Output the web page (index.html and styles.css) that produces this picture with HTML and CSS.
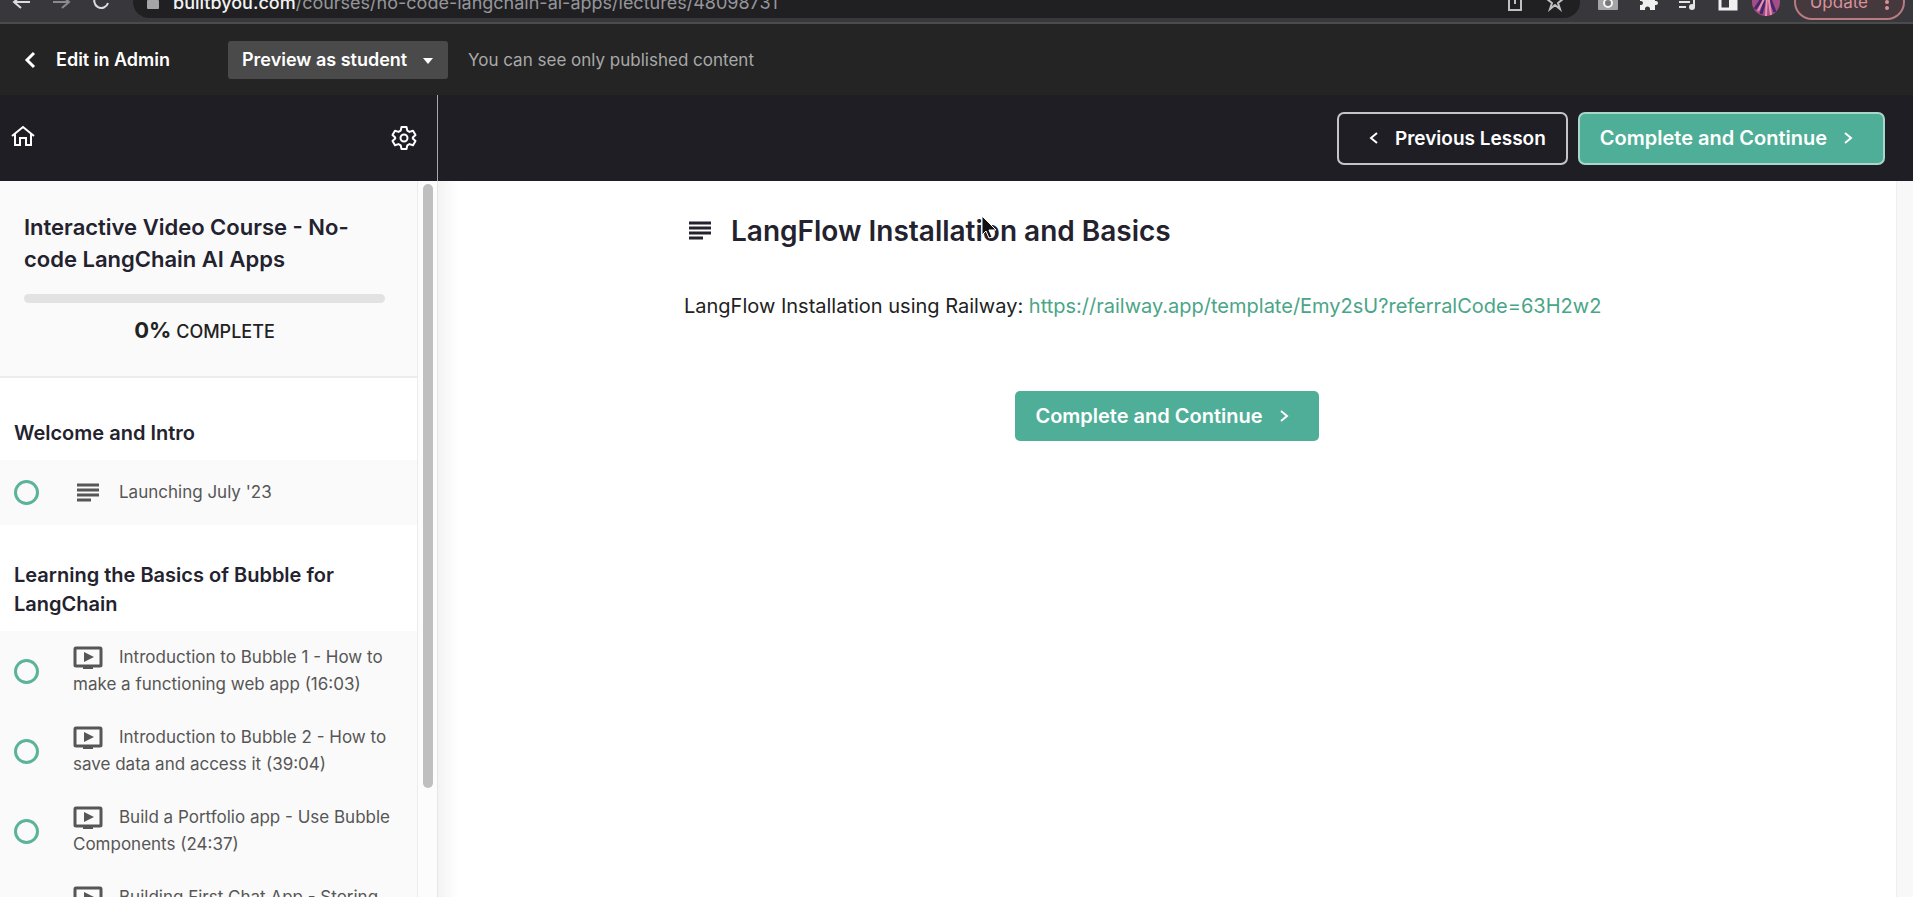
FILE: index.html
```html
<!DOCTYPE html>
<html lang="en">
<head>
<meta charset="utf-8">
<title>LangFlow Installation and Basics</title>
<link rel="stylesheet" href="styles.css">
</head>
<body>
<svg class="sprite" aria-hidden="true">
  <symbol id="lines" viewBox="0 0 22 20"><path d="M0 2h22M0 7h22M0 12h22M0 17h14" fill="none" stroke="currentColor" stroke-width="3"/></symbol>
  <symbol id="video" viewBox="0 0 30 24"><rect x="2" y="2" width="26" height="18" rx="1" fill="none" stroke="currentColor" stroke-width="3"/><path d="M11 6l10 5-10 5z" fill="currentColor"/><path d="M10 20h10v3H10z" fill="currentColor"/></symbol>
  <symbol id="left" viewBox="0 0 10 14"><path d="M8 2L2 7l6 5" fill="none" stroke="currentColor" stroke-width="2"/></symbol>
  <symbol id="right" viewBox="0 0 10 14"><path d="M2 2l6 5-6 5" fill="none" stroke="currentColor" stroke-width="2"/></symbol>
</svg>

<div class="browser">
  <div class="browser-row">
    <nav class="browser-nav">
      <svg width="24" height="20" viewBox="0 0 24 20"><path d="M21 10H5M12 4l-7 6 7 6" fill="none" stroke="#dcdce0" stroke-width="2"/></svg>
      <svg width="24" height="20" viewBox="0 0 24 20"><path d="M3 10h16M12 4l7 6-7 6" fill="none" stroke="#8a8a90" stroke-width="2"/></svg>
      <svg width="20" height="20" viewBox="0 0 20 20"><path d="M16 5a7 7 0 1 0 1 6M17 1v6h-6" fill="none" stroke="#dcdce0" stroke-width="2"/></svg>
    </nav>
    <div class="address">
      <svg width="12" height="18" viewBox="0 0 12 18"><path d="M3 8V5a3 3 0 0 1 6 0v3" fill="none" stroke="#a5a5a5" stroke-width="2"/><rect y="7" width="12" height="9" rx="1" fill="#a5a5a5"/></svg>
      <span class="url"><b>builtbyou.com</b>/courses/no-code-langchain-ai-apps/lectures/48098731</span>
      <svg width="16" height="22" viewBox="0 0 16 22"><path d="M5 7H2v12h12V7h-3M8 13V2M4 5l4-4 4 4" fill="none" stroke="#c0c0c0" stroke-width="2"/></svg>
      <svg width="20" height="20" viewBox="0 0 20 20"><path d="M10 1l2 6h6l-5 4 2 6-5-4-5 4 2-6-5-4h6z" fill="none" stroke="#c0c0c0" stroke-width="2"/></svg>
    </div>
    <div class="extensions">
      <svg width="20" height="20" viewBox="0 0 20 20"><rect width="20" height="18" rx="1" fill="#a4a4a6"/><circle cx="10" cy="11" r="4" fill="#777" stroke="#f4f4f4" stroke-width="2"/></svg>
      <svg width="20" height="20" viewBox="0 0 20 20"><path d="M2 4h5V3a2 2 0 0 1 5 0v1h5v5h1a2 2 0 0 1 0 4h-1v5h-5v-1a2 2 0 0 0-5 0v1H2v-5h1a2 2 0 0 0 0-4H2z" fill="#f0f0f0"/></svg>
      <svg width="20" height="20" viewBox="0 0 20 20"><path d="M1 6h11M1 10h11M1 15h7M16 15V4h4" fill="none" stroke="#e4e4e4" stroke-width="2"/><circle cx="14" cy="15" r="3" fill="#e4e4e4"/></svg>
      <svg width="20" height="20" viewBox="0 0 20 20"><rect x="2" y="1" width="16" height="16" fill="none" stroke="#f0f0f0" stroke-width="3"/><path d="M11 1h7v16h-7z" fill="#f0f0f0"/></svg>
      <svg class="avatar" width="28" height="28" viewBox="0 0 28 28"><circle cx="14" cy="14" r="14" fill="#a54d86"/><path d="M3 21L14 5M9 26l6-20M23 24L16 6" stroke="#45276f" stroke-width="3"/><path d="M6 23l9-18M14 28l1-22M19 27L16 6" stroke="#e891ad" stroke-width="2"/></svg>
      <button class="update">Update <svg width="4" height="20" viewBox="0 0 4 20"><g fill="#d8929b"><circle cx="2" cy="4" r="2"/><circle cx="2" cy="10" r="2"/><circle cx="2" cy="16" r="2"/></g></svg></button>
    </div>
  </div>
</div>

<div class="admin-bar">
  <a class="edit" href="#"><svg width="12" height="18" viewBox="0 0 12 18"><path d="M10 2L3 9l7 7" fill="none" stroke="currentColor" stroke-width="3"/></svg>Edit in Admin</a>
  <div class="preview">
    <select aria-label="Preview mode"><option>Preview as student</option></select>
    <svg class="caret" width="10" height="6" viewBox="0 0 10 6"><path d="M0 0h10L5 6z" fill="currentColor"/></svg>
  </div>
  <span class="note">You can see only published content</span>
</div>

<header class="course-bar">
  <div class="course-tools">
    <a href="#" aria-label="Home"><svg width="24" height="22" viewBox="0 0 24 22"><path d="M1 11L12 2l11 9M4 9v11h5v-7h6v7h5V9" fill="none" stroke="currentColor" stroke-width="2"/></svg></a>
    <button class="plain" aria-label="Settings"><svg width="26" height="26" viewBox="0 0 26 26"><path d="M10.500 2h5l.8 3.600 2.200 1.300 3.500-1.100 2.500 4.200-2.700 2.500v1l2.700 2.500-2.500 4.200-3.500-1.100-2.200 1.300-.8 3.600h-5l-.8-3.600-2.200-1.300L4 20.200 1.500 16l2.700-2.500v-1L1.500 10 4 5.800l3.500 1.100 2.200-1.300z" fill="none" stroke="currentColor" stroke-width="2" stroke-linejoin="round"/><circle cx="13" cy="13" r="3.500" fill="none" stroke="currentColor" stroke-width="2"/></svg></button>
  </div>
  <div class="lesson-nav">
    <button class="btn outline"><svg width="10" height="14"><use href="#left"/></svg>Previous Lesson</button>
    <button class="btn green bordered">Complete and Continue<svg width="10" height="14"><use href="#right"/></svg></button>
  </div>
</header>

<div class="content">
  <aside class="sidebar">
    <div class="outline-panel">
      <div class="course-head">
        <h2>Interactive Video Course - No-code LangChain AI Apps</h2>
        <div class="progress" role="progressbar" aria-valuenow="0" aria-label="Course progress"></div>
        <p class="percent"><b>0%</b> COMPLETE</p>
      </div>
      <section>
        <h3>Welcome and Intro</h3>
        <ul class="short">
          <li><span class="ring"></span><a href="#"><svg class="icon lines" width="22" height="20"><use href="#lines"/></svg>Launching July '23</a></li>
        </ul>
      </section>
      <section>
        <h3>Learning the Basics of Bubble for LangChain</h3>
        <ul>
          <li><span class="ring"></span><a href="#"><svg class="icon" width="30" height="24"><use href="#video"/></svg>Introduction to Bubble 1 - How to make a functioning web app (16:03)</a></li>
          <li><span class="ring"></span><a href="#"><svg class="icon" width="30" height="24"><use href="#video"/></svg>Introduction to Bubble 2 - How to save data and access it (39:04)</a></li>
          <li><span class="ring"></span><a href="#"><svg class="icon" width="30" height="24"><use href="#video"/></svg>Build a Portfolio app - Use Bubble Components (24:37)</a></li>
          <li><span class="ring"></span><a href="#"><svg class="icon" width="30" height="24"><use href="#video"/></svg>Building First Chat App - Storing</a></li>
        </ul>
      </section>
    </div>
    <div class="track"><div class="thumb"></div></div>
  </aside>
  <main>
    <article>
      <h1><svg width="22" height="20"><use href="#lines"/></svg>LangFlow Installation and Basics
        <svg class="cursor" width="16" height="24" viewBox="0 0 16 24"><path d="M1 1v19l4-4 3 7 3-1-3-7h7z" fill="#111" stroke="#fff" stroke-width="1"/></svg></h1>
      <p>LangFlow Installation using Railway: <a href="#">https://railway.app/template/Emy2sU?referralCode=63H2w2</a></p>
      <button class="btn green">Complete and Continue<svg width="10" height="14"><use href="#right"/></svg></button>
    </article>
  </main>
  <div class="page-track"></div>
</div>
</body>
</html>
```

FILE: styles.css
```css
* { box-sizing: border-box; }
body {
  margin: 0;
  height: 100vh;
  display: flex;
  flex-direction: column;
  overflow: hidden;
  background: #fff;
  color: #222;
  font-family: Inter, "Open Sans", sans-serif;
}
h1, h2, h3, p, ul { margin: 0; padding: 0; }
ul { list-style: none; }
a { color: inherit; text-decoration: none; }
button, select { font: inherit; cursor: pointer; }
svg { flex: none; }
.sprite { display: none; }

.browser {
  flex: none;
  height: 24px;
  display: flex;
  align-items: flex-end;
  overflow: hidden;
  background: #38373b;
  border-bottom: 2px solid #4b4b4d;
}
.browser-row { flex: 1; height: 40px; display: flex; align-items: center; }
.browser-nav { display: flex; align-items: center; gap: 17px; padding: 0 22px 0 9px; }
.address {
  flex: 1;
  height: 32px;
  display: flex;
  align-items: center;
  gap: 22px;
  padding: 0 15px 0 14px;
  border-radius: 16px;
  background: #202022;
}
.url { flex: 1; margin-left: -8px; color: #96969a; font-size: 18px; }
.url b { color: #f2f2f2; font-weight: 500; }
.extensions { display: flex; align-items: center; gap: 20px; padding: 0 8px 0 18px; }
.update {
  height: 36px;
  display: flex;
  align-items: center;
  gap: 17px;
  padding: 0 14px;
  border: 2px solid #b97a83;
  border-radius: 18px;
  background: #45393e;
  color: #d8929b;
  font-size: 17px;
}
.extensions .avatar { margin: 0 -6px; }

.admin-bar {
  flex: none;
  height: 71px;
  display: flex;
  align-items: center;
  padding: 0 24px;
  background: #242424;
  color: #fff;
  font-size: 18px;
}
.edit { display: flex; align-items: center; gap: 20px; font-weight: 600; }
.preview { position: relative; margin: 0 20px 0 58px; }
.preview select {
  appearance: none;
  height: 38px;
  padding: 0 40px 0 14px;
  border: 0;
  border-radius: 3px;
  background: #4a4a4a;
  color: #fff;
  font-weight: 600;
}
.caret { position: absolute; right: 15px; top: 17px; pointer-events: none; }
.note { color: #a9a9a9; font-size: 17px; }

.course-bar { flex: none; height: 86px; display: flex; background: #1f1e24; color: #fff; }
.course-tools {
  width: 438px;
  display: flex;
  align-items: center;
  justify-content: space-between;
  padding: 0 20px 0 11px;
  border-right: 1px solid #a9a9ad;
}
.plain { display: flex; padding: 0; border: 0; background: none; color: inherit; }
.lesson-nav { flex: 1; display: flex; align-items: center; justify-content: flex-end; gap: 10px; padding-right: 28px; }
.btn {
  height: 50px;
  display: flex;
  align-items: center;
  gap: 16px;
  padding: 0 30px 0 20px;
  border: 0;
  border-radius: 5px;
  color: #fff;
  font-size: 20px;
  font-weight: 600;
}
.green { background: #4fae98; }
.outline { height: 53px; padding: 0 20px 0 30px; border: 2px solid #c5c5c9; background: transparent; border-radius: 7px; font-size: 19px; }
.bordered { height: 53px; border: 2px solid #a9d6cb; border-radius: 7px; }

.content { flex: 1; min-height: 0; display: flex; }
.sidebar { width: 438px; display: flex; border-right: 1px solid #e6e6e6; }
.outline-panel { flex: 1; overflow: hidden; }
.course-head { height: 197px; margin-bottom: 5px; padding: 30px 24px 0; border-bottom: 2px solid #ececec; background: #fafafa; }
h2 { color: #23222e; font-size: 22px; line-height: 32px; font-weight: 600; }
.progress { height: 9px; margin: 19px 8px 0 0; border-radius: 5px; background: #e2e2e2; }
.percent { padding: 12px 8px 0 0; text-align: center; font-size: 18px; line-height: 30px; font-weight: 500; }
.percent b { font-size: 22px; font-weight: 700; }
h3 { padding: 36px 14px 12px; color: #23222e; font-size: 20px; line-height: 29px; font-weight: 600; }
ul { background: #fafafa; }
li { min-height: 80px; display: flex; align-items: center; gap: 34px; padding: 13px 14px; color: #565656; font-size: 17px; line-height: 27px; }
li a { flex: 1; align-self: flex-start; }
.ring { flex: none; width: 25px; height: 25px; border: 3px solid #5bb399; border-radius: 50%; }
.icon { margin-right: 16px; vertical-align: middle; }
.icon.lines { margin: 0 20px 0 4px; }
.short li { min-height: 65px; padding: 19px 14px; }
.track { width: 20px; padding: 3px 4px; border-left: 1px solid #ececec; background: #fcfcfc; }
.thumb { width: 10px; height: 85%; margin: 0 auto; border-radius: 5px; background: #bfbfbf; }

main { flex: 1; display: flex; justify-content: center; background: linear-gradient(90deg, #f3f3f3, #fff 20px); }
article { width: 966px; padding-top: 32px; }
h1 { position: relative; display: flex; align-items: center; gap: 20px; padding-left: 5px; color: #23222e; font-size: 28px; line-height: 36px; font-weight: 600; }
.cursor { position: absolute; left: 297px; top: 2px; }
article p { padding: 42px 0 70px; font-size: 20px; line-height: 30px; }
article p a { color: #4aa587; }
article .btn { margin: 0 auto; }
.page-track { width: 17px; background: #f8f8f8; border-left: 1px solid #efefef; }
```
